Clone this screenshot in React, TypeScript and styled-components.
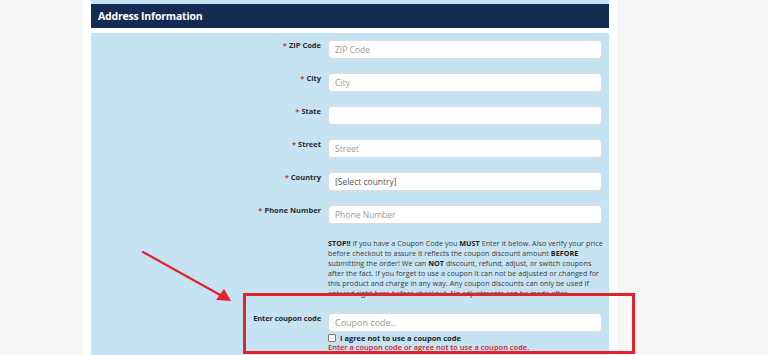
import React from "react";
import styled, { createGlobalStyle } from "styled-components";

const GlobalStyle = createGlobalStyle`
  body {
    margin: 0;
    background: #f7f7f7;
    font-family: "Open Sans", "Liberation Sans", sans-serif;
  }
`;

const Page = styled.div`
  position: relative;
  display: flex;
  padding-left: 83px;
  height: 355px;
  overflow: hidden;
`;

const Column = styled.div`
  width: 518px;
  padding: 0 8px;
  background: #ffffff;
`;

const TopStrip = styled.div`
  height: 4px;
  background: #c5e3f2;
`;

const Header = styled.div`
  height: 24px;
  display: flex;
  align-items: center;
  padding-left: 7px;
  background: #142b54;
  color: #ffffff;
  font-size: 10.5px;
  font-weight: 700;
  letter-spacing: -0.2px;
`;

const Gap = styled.div`
  height: 5px;
`;

const Body = styled.div`
  background: #c5e3f2;
  padding-top: 7px;
  display: flex;
  flex-direction: column;
  gap: 14px;
  height: 400px;
`;

const Row = styled.div`
  display: grid;
  grid-template-columns: 230px 274px;
  column-gap: 7px;
  align-items: start;
`;

const Label = styled.div`
  text-align: right;
  font-size: 7.5px;
  line-height: 10px;
  font-weight: 700;
  color: #2a2a2a;
`;

const Star = styled.span`
  color: #c0392b;
  margin-right: 2px;
`;

const Input = styled.div<{ $filled?: boolean }>`
  height: 19px;
  box-sizing: border-box;
  border: 1px solid #dcdcdc;
  border-radius: 4px;
  background: #ffffff;
  display: flex;
  align-items: center;
  padding-left: 6px;
  font-size: 8.5px;
  color: ${(p) => (p.$filled ? "#555" : "#9a9a9a")};
`;

const Note = styled.p`
  grid-column: 2;
  margin: 0;
  font-size: 7.2px;
  line-height: 10px;
  letter-spacing: 0.03px;
  white-space: nowrap;
  color: #3c3c3c;
  b {
    color: #1e1e1e;
  }
`;

const CouponRow = styled(Row)`
  margin-top: 1px;
`;

const CouponLabel = styled(Label)`
  font-size: 7.5px;
  letter-spacing: -0.1px;
`;

const CouponInput = styled(Input)`
  font-size: 9px;
`;

const Stack = styled.div`
  display: flex;
  flex-direction: column;
`;

const Agree = styled.label`
  display: flex;
  align-items: center;
  gap: 4px;
  margin-top: 1px;
  font-size: 7.5px;
  line-height: 10px;
  font-weight: 700;
  color: #222;
`;

const Box = styled.span`
  width: 6px;
  height: 6px;
  border: 1px solid #777;
  border-radius: 1px;
  background: #fff;
`;

const Error = styled.div`
  font-size: 7.5px;
  line-height: 9px;
  font-weight: 600;
  color: #d0202a;
`;

const Highlight = styled.div`
  position: absolute;
  left: 243px;
  top: 293px;
  width: 386px;
  height: 55px;
  border: 3px solid #e3222a;
`;

const Arrow = styled.svg`
  position: absolute;
  left: 0;
  top: 0;
  pointer-events: none;
`;

const fields = [
  { label: "ZIP Code", placeholder: "ZIP Code" },
  { label: "City", placeholder: "City" },
  { label: "State", placeholder: "" },
  { label: "Street", placeholder: "Street" },
  { label: "Country", placeholder: "[Select country]", filled: true },
  { label: "Phone Number", placeholder: "Phone Number" },
];

export default function App() {
  return (
    <>
      <GlobalStyle />
      <Page>
        <Column>
          <TopStrip />
          <Header>Address Information</Header>
          <Gap />
          <Body>
            {fields.map((f) => (
              <Row key={f.label}>
                <Label>
                  <Star>*</Star>
                  {f.label}
                </Label>
                <Input $filled={f.filled}>{f.placeholder}</Input>
              </Row>
            ))}
            <Row>
              <Note>
                <b>STOP!!</b> If you have a Coupon Code you <b>MUST</b> Enter it below. Also verify your price
                <br />
                before checkout to assure it reflects the coupon discount amount <b>BEFORE</b>
                <br />
                submitting the order! We can <b>NOT</b> discount, refund, adjust, or switch coupons
                <br />
                after the fact. If you forget to use a coupon it can not be adjusted or changed for
                <br />
                this product and charge in any way. Any coupon discounts can only be used if
                <br />
                entered right here before checkout. No adjustments can be made after.
              </Note>
            </Row>
            <CouponRow>
              <CouponLabel>Enter coupon code</CouponLabel>
              <Stack>
                <CouponInput>Coupon code..</CouponInput>
                <Agree>
                  <Box />I agree not to use a coupon code
                </Agree>
                <Error>Enter a coupon code or agree not to use a coupon code.</Error>
              </Stack>
            </CouponRow>
          </Body>
        </Column>
        <Highlight />
        <Arrow width="768" height="355" viewBox="0 0 768 355">
          <line x1="143" y1="252" x2="222" y2="296" stroke="#e3222a" strokeWidth="2.2" strokeLinecap="round" />
          <polygon points="231,301 216,300 224,289" fill="#e3222a" />
        </Arrow>
      </Page>
    </>
  );
}
